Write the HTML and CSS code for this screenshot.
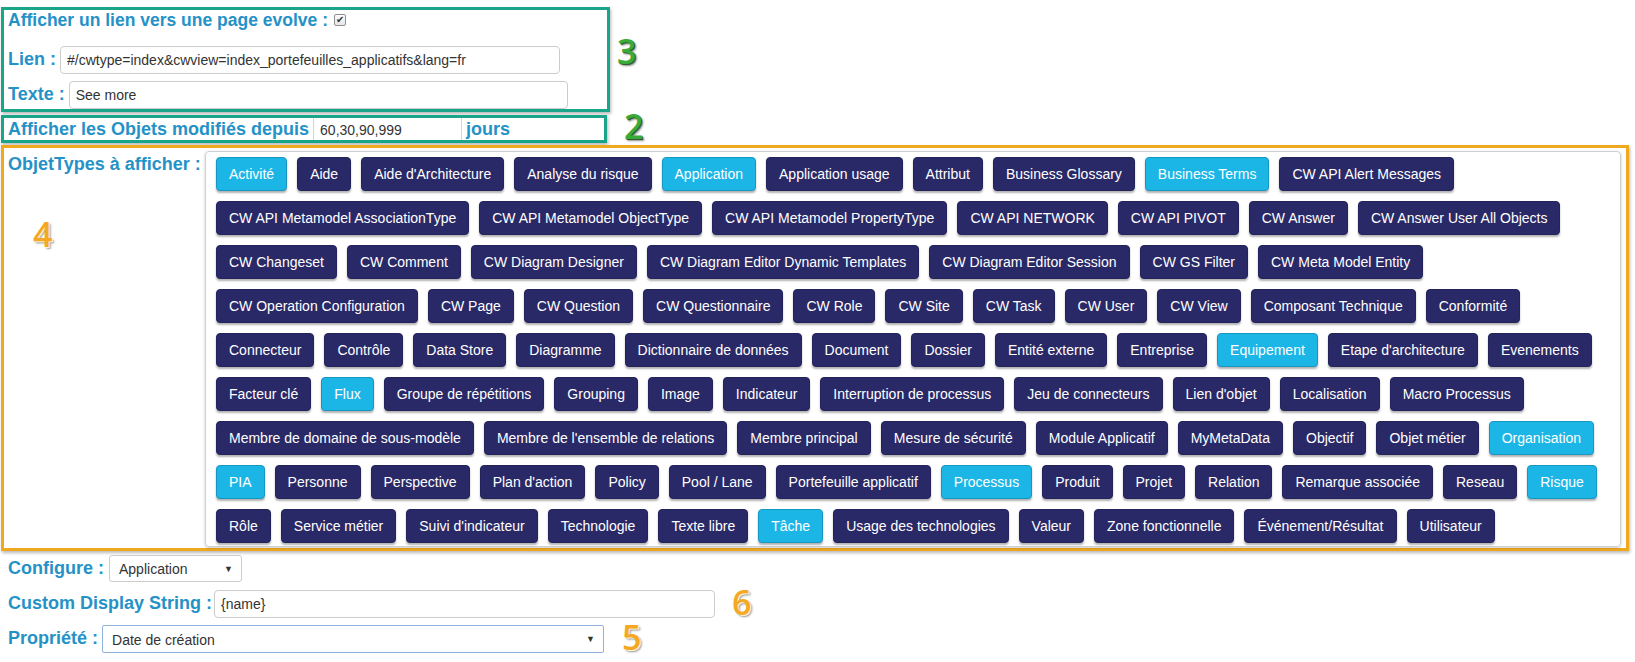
FILE: index.html
```html
<!DOCTYPE html>
<html lang="fr">
<head>
<meta charset="utf-8">
<title>Configuration</title>
<link rel="stylesheet" href="styles.css">
</head>
<body>
<div class="page">
  <section class="frame frame-green frame-link">
    <div class="title-row">
      <span class="label label-title">Afficher un lien vers une page evolve :</span>
      <input type="checkbox" class="check" checked>
    </div>
    <div class="field-row field-row--lien">
      <label class="label">Lien :</label>
      <input class="text-input input-lien" type="text" value="#/cwtype=index&amp;cwview=index_portefeuilles_applicatifs&amp;lang=fr">
    </div>
    <div class="field-row field-row--texte">
      <label class="label">Texte :</label>
      <input class="text-input input-texte" type="text" value="See more">
    </div>
  </section>

  <section class="frame frame-green frame-days">
    <span class="label">Afficher les Objets modifiés depuis</span>
    <input class="days-input" type="text" value="60,30,90,999">
    <span class="label days-unit">jours</span>
  </section>

  <section class="frame frame-orange frame-types">
    <div class="label types-label">ObjetTypes à afficher :</div>
    <div class="panel">
      <div class="btn-row">
        <span class="tbtn on">Activité</span><span class="tbtn">Aide</span><span class="tbtn">Aide d'Architecture</span><span class="tbtn">Analyse du risque</span><span class="tbtn on">Application</span><span class="tbtn">Application usage</span><span class="tbtn">Attribut</span><span class="tbtn">Business Glossary</span><span class="tbtn on">Business Terms</span><span class="tbtn">CW API Alert Messages</span>
      </div>
      <div class="btn-row">
        <span class="tbtn">CW API Metamodel AssociationType</span><span class="tbtn">CW API Metamodel ObjectType</span><span class="tbtn">CW API Metamodel PropertyType</span><span class="tbtn">CW API NETWORK</span><span class="tbtn">CW API PIVOT</span><span class="tbtn">CW Answer</span><span class="tbtn">CW Answer User All Objects</span>
      </div>
      <div class="btn-row">
        <span class="tbtn">CW Changeset</span><span class="tbtn">CW Comment</span><span class="tbtn">CW Diagram Designer</span><span class="tbtn">CW Diagram Editor Dynamic Templates</span><span class="tbtn">CW Diagram Editor Session</span><span class="tbtn">CW GS Filter</span><span class="tbtn">CW Meta Model Entity</span>
      </div>
      <div class="btn-row">
        <span class="tbtn">CW Operation Configuration</span><span class="tbtn">CW Page</span><span class="tbtn">CW Question</span><span class="tbtn">CW Questionnaire</span><span class="tbtn">CW Role</span><span class="tbtn">CW Site</span><span class="tbtn">CW Task</span><span class="tbtn">CW User</span><span class="tbtn">CW View</span><span class="tbtn">Composant Technique</span><span class="tbtn">Conformité</span>
      </div>
      <div class="btn-row">
        <span class="tbtn">Connecteur</span><span class="tbtn">Contrôle</span><span class="tbtn">Data Store</span><span class="tbtn">Diagramme</span><span class="tbtn">Dictionnaire de données</span><span class="tbtn">Document</span><span class="tbtn">Dossier</span><span class="tbtn">Entité externe</span><span class="tbtn">Entreprise</span><span class="tbtn on">Equipement</span><span class="tbtn">Etape d'architecture</span><span class="tbtn">Evenements</span>
      </div>
      <div class="btn-row">
        <span class="tbtn">Facteur clé</span><span class="tbtn on">Flux</span><span class="tbtn">Groupe de répétitions</span><span class="tbtn">Grouping</span><span class="tbtn">Image</span><span class="tbtn">Indicateur</span><span class="tbtn">Interruption de processus</span><span class="tbtn">Jeu de connecteurs</span><span class="tbtn">Lien d'objet</span><span class="tbtn">Localisation</span><span class="tbtn">Macro Processus</span>
      </div>
      <div class="btn-row">
        <span class="tbtn">Membre de domaine de sous-modèle</span><span class="tbtn">Membre de l'ensemble de relations</span><span class="tbtn">Membre principal</span><span class="tbtn">Mesure de sécurité</span><span class="tbtn">Module Applicatif</span><span class="tbtn">MyMetaData</span><span class="tbtn">Objectif</span><span class="tbtn">Objet métier</span><span class="tbtn on">Organisation</span>
      </div>
      <div class="btn-row">
        <span class="tbtn on">PIA</span><span class="tbtn">Personne</span><span class="tbtn">Perspective</span><span class="tbtn">Plan d'action</span><span class="tbtn">Policy</span><span class="tbtn">Pool / Lane</span><span class="tbtn">Portefeuille applicatif</span><span class="tbtn on">Processus</span><span class="tbtn">Produit</span><span class="tbtn">Projet</span><span class="tbtn">Relation</span><span class="tbtn">Remarque associée</span><span class="tbtn">Reseau</span><span class="tbtn on">Risque</span>
      </div>
      <div class="btn-row">
        <span class="tbtn">Rôle</span><span class="tbtn">Service métier</span><span class="tbtn">Suivi d'indicateur</span><span class="tbtn">Technologie</span><span class="tbtn">Texte libre</span><span class="tbtn on">Tâche</span><span class="tbtn">Usage des technologies</span><span class="tbtn">Valeur</span><span class="tbtn">Zone fonctionnelle</span><span class="tbtn">Événement/Résultat</span><span class="tbtn">Utilisateur</span>
      </div>
    </div>
  </section>

  <div class="form-row form-row--configure">
    <label class="label">Configure :</label>
    <span class="select select-configure">Application</span>
  </div>
  <div class="form-row form-row--custom">
    <label class="label">Custom Display String :</label>
    <input class="text-input input-custom" type="text" value="{name}">
  </div>
  <div class="form-row form-row--prop">
    <label class="label">Propriété :</label>
    <span class="select select-prop">Date de création</span>
  </div>

  <span class="mark mark-green mark-3">3</span>
  <span class="mark mark-green mark-2">2</span>
  <span class="mark mark-orange mark-4">4</span>
  <span class="mark mark-orange mark-6">6</span>
  <span class="mark mark-orange mark-5">5</span>
</div>
</body>
</html>
```

FILE: styles.css
```css
* { box-sizing: border-box; }
html, body { margin: 0; padding: 0; background: #fff; }
body { font-family: "Liberation Sans", Arial, sans-serif; color: #333; }

.page {
  position: relative;
  width: 1635px;
  height: 662px;
  padding-left: 1px;
  overflow: hidden;
}

.label {
  font-weight: bold;
  font-size: 18px;
  line-height: 20px;
  color: #2592c7;
  white-space: nowrap;
}
.label-title { font-size: 17.5px; }

/* annotation frames */
.frame {
  border: 3px solid;
  box-shadow: 1px 2px 3px rgba(0, 0, 0, 0.28);
}
.frame-green { border-color: #1aa488; }
.frame-orange { border-color: #f0a91f; }

.frame-link {
  width: 609px;
  height: 105px;
  margin-top: 7px;
  padding-left: 4px;
}
.title-row {
  display: flex;
  align-items: center;
  height: 20px;
}
.check {
  appearance: none;
  -webkit-appearance: none;
  position: relative;
  width: 12px;
  height: 12px;
  margin: 0 0 0 6px;
  border: 1px solid #8f8f8f;
  border-radius: 2px;
  background: linear-gradient(#fdfdfd, #e6e6e6);
}
.check::after {
  content: "\2714";
  position: absolute;
  left: 1px;
  top: -2px;
  font-size: 10px;
  line-height: 14px;
  color: #333;
}

.field-row {
  display: flex;
  align-items: center;
}
.field-row .label { padding-bottom: 3px; }
.field-row--lien { margin-top: 16px; }
.field-row--texte { margin-top: 7px; }

.text-input {
  height: 28px;
  margin-left: 4px;
  padding: 0 6px;
  border: 1px solid #cccccc;
  border-radius: 4px;
  font-family: "Liberation Sans", Arial, sans-serif;
  font-size: 14px;
  color: #333;
  background: #fff;
  outline: none;
}
.input-lien { width: 500px; }
.input-texte { width: 499px; }

.frame-days {
  display: flex;
  align-items: center;
  width: 606px;
  height: 28px;
  margin-top: 3px;
  padding-left: 4px;
}
.days-input {
  width: 149px;
  height: 22px;
  margin-left: 4px;
  padding: 2px 6px 0;
  border: none;
  border-left: 1px solid #d6d6d6;
  border-right: 1px solid #d6d6d6;
  font-family: "Liberation Sans", Arial, sans-serif;
  font-size: 14px;
  color: #333;
  outline: none;
}
.days-unit { margin-left: 4px; }

.frame-types {
  display: flex;
  align-items: flex-start;
  width: 1628px;
  height: 406px;
  margin-top: 2px;
  padding: 3px 5px 1px 0;
}
.types-label {
  width: 201px;
  flex: none;
  padding: 2px 0 0 4px;
  line-height: 22px;
}
.panel {
  flex: 1;
  height: 396px;
  padding: 5px 10px 0;
  border: 1px solid #cfcfcf;
  border-radius: 4px;
  box-shadow: 0 1px 3px rgba(0, 0, 0, 0.22);
  display: flex;
  flex-direction: column;
  gap: 10px;
}
.btn-row {
  display: flex;
  gap: 10px;
}
.tbtn {
  display: inline-flex;
  align-items: center;
  height: 34px;
  padding: 0 12px;
  border: 1px solid #24235c;
  border-radius: 4px;
  background: #2a2967;
  color: #fff;
  font-size: 14px;
  white-space: nowrap;
  box-shadow: 0 2px 2px rgba(0, 0, 0, 0.3);
}
.tbtn.on {
  background: #1cb6e6;
  border-color: #1796c2;
}

/* bottom form */
.form-row {
  display: flex;
  align-items: center;
  padding-left: 7px;
}
.form-row .label { padding-bottom: 2px; }
.form-row--configure { margin-top: 4px; }
.form-row--custom { margin-top: 8px; }
.form-row--prop { margin-top: 7px; }

.select {
  position: relative;
  display: flex;
  align-items: center;
  height: 27px;
  padding: 1px 0 0 9px;
  border: 1px solid #cccccc;
  border-radius: 3px;
  font-size: 14px;
  color: #333;
  background: #fff;
}
.select::after {
  content: "\25BC";
  position: absolute;
  right: 8px;
  top: 8px;
  font-size: 9px;
  line-height: 10px;
  color: #333;
}
.select-configure { width: 133px; margin-left: 5px; }
.select-prop {
  width: 502px;
  height: 28px;
  margin-left: 4px;
  border-color: #8fb3de;
  border-radius: 2px;
}
.input-custom { width: 501px; margin-left: 2px; }

/* numbered annotations */
.mark {
  position: absolute;
  font-family: "Open Sans", "Liberation Sans", sans-serif;
  font-weight: 600;
  font-size: 34px;
  line-height: 34px;
}
.mark-green {
  color: #3aab38;
  text-shadow: 1px 1px 0 #2f5d2c, 2px 2px 2px rgba(0, 0, 0, 0.45);
}
.mark-orange {
  color: #f5a823;
  text-shadow: 1px 1px 0 #fff3d6, 2px 2px 2px rgba(0, 0, 0, 0.4);
}
.mark-3 { left: 617px; top: 34px; }
.mark-2 { left: 624px; top: 109px; }
.mark-4 { left: 33px; top: 217px; }
.mark-6 { left: 732px; top: 585px; }
.mark-5 { left: 622px; top: 620px; }
```
